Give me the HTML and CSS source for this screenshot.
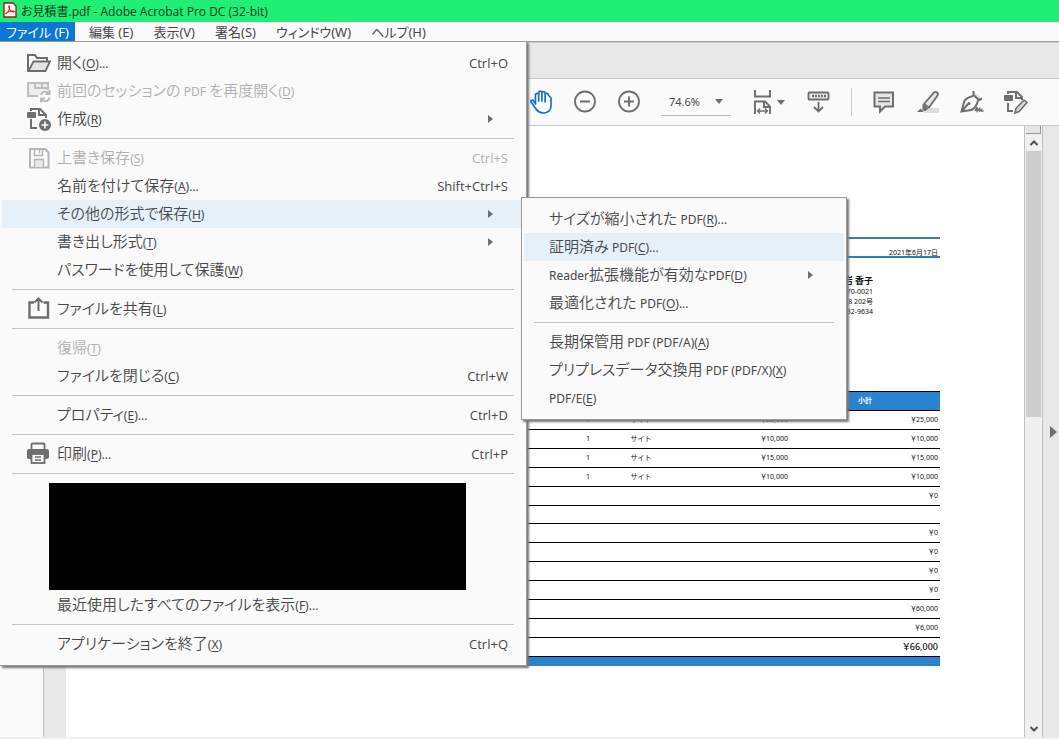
FILE: index.html
```html
<!DOCTYPE html>
<html lang="ja">
<head>
<meta charset="utf-8">
<title>お見積書.pdf - Adobe Acrobat Pro DC (32-bit)</title>
<link rel="stylesheet" href="styles.css">
</head>
<body>
<div class="app">
  <header class="titlebar">
    <svg class="app-icon" width="14" height="16" viewBox="0 0 14 16"><path d="M1 1h9l3 3v11H1z" fill="#fff" stroke="#a31b12" stroke-width="1.4"/><path d="M3 11.800c1.500-.3 4-4.500 3.600-7.300c-.2-1-1.200-.6-.8.6c.6 2.400 2.600 4.500 4.700 4.900c1 .1 1-.9 0-1c-2.500-.2-5.500.7-7.300 1.900c-.6.500-.5.900-.2.900z" fill="none" stroke="#d8271c" stroke-width="1.100"/></svg>
    <span>お見積書.pdf - Adobe Acrobat Pro DC (32-bit)</span>
  </header>

  <nav class="menubar">
    <button class="menubar-item active">ファイル (F)</button>
    <button class="menubar-item">編集 (E)</button>
    <button class="menubar-item">表示(V)</button>
    <button class="menubar-item">署名(S)</button>
    <button class="menubar-item">ウィンドウ(W)</button>
    <button class="menubar-item">ヘルプ(H)</button>

    <ul class="menu file-menu">
      <li><button class="item"><svg class="icon" viewBox="0 0 24 24"><path d="M1 20V4h7l2 3h10v4" fill="none" stroke="#6e6e6e" stroke-width="2"/><path d="M1.500 20L6.500 10.500H23L18.500 20z" fill="#e4e4e4" stroke="#6e6e6e" stroke-width="1.800"/></svg><span class="label">開く<small>(<u>O</u>)...</small></span><kbd>Ctrl+O</kbd></button></li>
      <li><button class="item" disabled><svg class="icon" viewBox="0 0 24 24"><path d="M11 17H1V4h20v7" fill="#eee" stroke="#bdbdbd" stroke-width="2"/><path d="M8 4v5h13M15 4v5" fill="none" stroke="#bdbdbd" stroke-width="1.800"/><path d="M14 16a4.500 4.500 0 0 1 8-1.500M22.500 18.500a4.500 4.500 0 0 1-8 2M22.500 11v4h-4M14 23.500v-4h4" fill="none" stroke="#b6b6b6" stroke-width="1.800"/></svg><span class="label">前回のセッションの <small>PDF</small> を再度開く<small>(<u>D</u>)</small></span></button></li>
      <li><button class="item"><svg class="icon" viewBox="0 0 24 24"><path d="M4 4V2h9l6 6v3M4 12v9h6M12 2v6h6" fill="none" stroke="#6e6e6e" stroke-width="2"/><rect x="0" y="5" width="9" height="6" rx="1" fill="#6e6e6e"/><circle cx="18" cy="18" r="6" fill="#6e6e6e"/><path d="M18 14.500v7M14.500 18h7" stroke="#fff" stroke-width="1.600"/></svg><span class="label">作成<small>(<u>R</u>)</small></span><svg class="arrow" viewBox="0 0 6 8"><path d="M0 0L5 4L0 8z"/></svg></button></li>
      <li class="separator"></li>
      <li><button class="item" disabled><svg class="icon" viewBox="0 0 24 24"><path d="M3 3h15l3.500 3.500V21.500H3z" fill="none" stroke="#b5b5b5" stroke-width="2"/><path d="M7.500 3v6.500h8V3M12.500 4v3.500" fill="none" stroke="#b5b5b5" stroke-width="1.500"/><path d="M7.500 21v-7.500h9V21" fill="#e8e8e8" stroke="#b5b5b5" stroke-width="1.300"/></svg><span class="label">上書き保存<small>(<u>S</u>)</small></span><kbd>Ctrl+S</kbd></button></li>
      <li><button class="item"><span class="icon"></span><span class="label">名前を付けて保存<small>(<u>A</u>)...</small></span><kbd>Shift+Ctrl+S</kbd></button></li>
      <li class="has-submenu"><button class="item selected"><span class="icon"></span><span class="label">その他の形式で保存<small>(<u>H</u>)</small></span><svg class="arrow" viewBox="0 0 6 8"><path d="M0 0L5 4L0 8z"/></svg></button>
        <ul class="menu submenu">
          <li><button class="item"><span class="label">サイズが縮小された <small>PDF(<u>R</u>)...</small></span></button></li>
          <li><button class="item selected"><span class="label">証明済み <small>PDF(<u>C</u>)...</small></span></button></li>
          <li><button class="item"><span class="label"><small>Reader</small>拡張機能が有効な<small>PDF(<u>D</u>)</small></span><svg class="arrow" viewBox="0 0 6 8"><path d="M0 0L5 4L0 8z"/></svg></button></li>
          <li><button class="item"><span class="label">最適化された <small>PDF(<u>O</u>)...</small></span></button></li>
          <li class="separator"></li>
          <li><button class="item"><span class="label">長期保管用 <small>PDF (PDF/A)(<u>A</u>)</small></span></button></li>
          <li><button class="item"><span class="label">プリプレスデータ交換用 <small>PDF (PDF/X)(<u>X</u>)</small></span></button></li>
          <li><button class="item"><span class="label"><small>PDF/E(<u>E</u>)</small></span></button></li>
        </ul>
      </li>
      <li><button class="item"><span class="icon"></span><span class="label">書き出し形式<small>(<u>T</u>)</small></span><svg class="arrow" viewBox="0 0 6 8"><path d="M0 0L5 4L0 8z"/></svg></button></li>
      <li><button class="item"><span class="icon"></span><span class="label">パスワードを使用して保護<small>(<u>W</u>)</small></span></button></li>
      <li class="separator"></li>
      <li><button class="item"><svg class="icon" viewBox="0 0 24 24"><path d="M7 5.500H2.500v15h18.500v-15h-4.500" fill="none" stroke="#6e6e6e" stroke-width="2.400"/><path d="M11.500 14V2.500M7.500 5.500l4-4l4 4" fill="none" stroke="#6e6e6e" stroke-width="2"/></svg><span class="label">ファイルを共有<small>(<u>L</u>)</small></span></button></li>
      <li class="separator"></li>
      <li><button class="item" disabled><span class="icon"></span><span class="label">復帰<small>(<u>T</u>)</small></span></button></li>
      <li><button class="item"><span class="icon"></span><span class="label">ファイルを閉じる<small>(<u>C</u>)</small></span><kbd>Ctrl+W</kbd></button></li>
      <li class="separator"></li>
      <li><button class="item"><span class="icon"></span><span class="label">プロパティ<small>(<u>E</u>)...</small></span><kbd>Ctrl+D</kbd></button></li>
      <li class="separator"></li>
      <li><button class="item"><svg class="icon" viewBox="0 0 24 24"><rect x="4.500" y="1.500" width="13" height="8" rx="1" fill="#fafafa" stroke="#6e6e6e" stroke-width="1.800"/><rect x="0" y="7" width="22" height="10" rx="2" fill="#6e6e6e"/><rect x="4.500" y="12" width="13" height="9" fill="#fafafa" stroke="#6e6e6e" stroke-width="1.800"/><path d="M8 15h6M8 18h6" stroke="#6e6e6e" stroke-width="1.300"/></svg><span class="label">印刷<small>(<u>P</u>)...</small></span><kbd>Ctrl+P</kbd></button></li>
      <li class="separator"></li>
      <li class="recent-files"></li>
      <li><button class="item"><span class="icon"></span><span class="label">最近使用したすべてのファイルを表示<small>(<u>F</u>)...</small></span></button></li>
      <li class="separator"></li>
      <li><button class="item"><span class="icon"></span><span class="label">アプリケーションを終了<small>(<u>X</u>)</small></span><kbd>Ctrl+Q</kbd></button></li>
    </ul>
  </nav>

  <div class="tabstrip"></div>

  <div class="toolbar">
    <button class="tool" aria-label="手のひらツール"><svg viewBox="0 0 24 24"><path d="M6.500 14V5a1.600 1.600 0 0 1 3.200 0V11V2.800a1.600 1.600 0 0 1 3.200 0V11V3.200a1.600 1.600 0 0 1 3.200 0V12V5a1.600 1.600 0 0 1 3.200 0L22 8v8c0 4.500-3.500 7-7.500 7s-6.500-2-8.500-5.500L2 12c-.8-1.800 1.500-2.500 2.500-1z" fill="#fff" stroke="#1a6fc4" stroke-width="1.700" stroke-linejoin="round"/></svg></button>
    <button class="tool" aria-label="縮小"><svg viewBox="0 0 24 24"><circle cx="12" cy="11.500" r="10" fill="none" stroke="#6e6e6e" stroke-width="1.800"/><path d="M7 11.500h10" stroke="#6e6e6e" stroke-width="2"/></svg></button>
    <button class="tool" aria-label="拡大"><svg viewBox="0 0 24 24"><circle cx="12" cy="11.500" r="10" fill="none" stroke="#6e6e6e" stroke-width="1.800"/><path d="M7 11.500h10M12 6.500v10" stroke="#6e6e6e" stroke-width="2"/></svg></button>
    <label class="zoom"><select aria-label="ズーム"><option>74.6%</option></select><svg class="caret" viewBox="0 0 8 5"><path d="M0 0H8L4 5z"/></svg></label>
    <button class="tool fit" aria-label="幅に合わせる"><svg viewBox="0 0 24 24"><path d="M4 0v6.500h15V0M4 24V11.500h10l5 5V24M13 12v5h5.500" fill="none" stroke="#6e6e6e" stroke-width="1.900"/><path d="M6.500 21h10M9 18.500L6.500 21l2.500 2.500M14 18.500l2.500 2.500l-2.500 2.500" fill="none" stroke="#6e6e6e" stroke-width="1.300"/></svg><svg class="caret" viewBox="0 0 8 5"><path d="M0 0H8L4 5z"/></svg></button>
    <button class="tool" aria-label="ツールバー"><svg viewBox="0 0 24 24"><rect x="1.500" y="2.500" width="20" height="7" rx="1" fill="#eee" stroke="#6e6e6e" stroke-width="1.900"/><path d="M5 6h14" stroke="#6e6e6e" stroke-width="2.500" stroke-dasharray="2 1"/><path d="M11.500 12v9.500M7 17l4.500 4.500l4.500-4.500" fill="none" stroke="#6e6e6e" stroke-width="1.900"/></svg></button>
    <span class="divider"></span>
    <div class="tool-group">
      <button class="tool" aria-label="コメント"><svg viewBox="0 0 24 24"><path d="M2.500 2.500h18.500v14h-8l-5 5v-5H2.500z" fill="#e6e6e6" stroke="#6e6e6e" stroke-width="2"/><path d="M6 8h12M6 11.500h12" stroke="#6e6e6e" stroke-width="1.500"/></svg></button>
      <button class="tool" aria-label="ハイライト"><svg viewBox="0 0 24 24"><rect x="8" y="18" width="15" height="5" fill="#dcdcdc"/><path d="M18 2.500c2-1.500 5 .5 3.500 3L13 17.500l-5-3.500z" fill="#e6e6e6" stroke="#6e6e6e" stroke-width="1.800"/><path d="M6.500 14l6 4.500l-3 2.500l-3-.5zM1 22l3.500-3.500l3 3L7 22z" fill="#6e6e6e"/></svg></button>
      <button class="tool" aria-label="署名"><svg viewBox="0 0 24 24"><path d="M14 2l7 5l-4 4z" fill="#e2e2e2"/><path d="M13.500 1v4l5.500 5l3-1.500" fill="none" stroke="#6e6e6e" stroke-width="2"/><path d="M13 6C9 7 5 9 4 12L1.500 21.500L11 20c4-1.500 6-5 7-9.500M2 21l6-7" fill="none" stroke="#6e6e6e" stroke-width="2"/><circle cx="9" cy="13.500" r="1.600" fill="#6e6e6e"/><path d="M15 21l2-4v4l2.500-2.500v2.500l2-1.500v1.500h2" fill="none" stroke="#6e6e6e" stroke-width="1.500"/></svg></button>
      <button class="tool" aria-label="編集"><svg viewBox="0 0 24 24"><path d="M4 4V2h9l5 5v3M4 13v8h5M12 2v6h6" fill="none" stroke="#6e6e6e" stroke-width="1.900"/><rect x="0" y="5" width="9" height="6" rx="1" fill="#6e6e6e"/><path d="M12 18.500L20 10l3 2.500L15 21.500l-4 1.500z" fill="#ddd" stroke="#6e6e6e" stroke-width="1.600"/></svg></button>
    </div>
  </div>

  <main class="workspace">
    <aside class="nav-pane"></aside>
    <article class="page">
      <div class="date">2021年6月17日</div>
      <address class="sender">
        <strong>岩 香子</strong>
        <span>70-0021</span>
        <span>8 202号</span>
        <span>32-9634</span>
      </address>
      <table class="estimate">
        <colgroup><col><col class="col-qty"><col class="col-unit"><col class="col-price"><col class="col-total"></colgroup>
        <thead><tr><th></th><th></th><th></th><th></th><th>小計</th></tr></thead>
        <tbody>
          <tr><td></td><td>1</td><td>サイト</td><td>￥25,000</td><td>￥25,000</td></tr>
          <tr><td></td><td>1</td><td>サイト</td><td>￥10,000</td><td>￥10,000</td></tr>
          <tr><td></td><td>1</td><td>サイト</td><td>￥15,000</td><td>￥15,000</td></tr>
          <tr><td></td><td>1</td><td>サイト</td><td>￥10,000</td><td>￥10,000</td></tr>
          <tr><td></td><td></td><td></td><td></td><td>￥0</td></tr>
          <tr class="blank"><td></td><td></td><td></td><td></td><td></td></tr>
          <tr><td></td><td></td><td></td><td></td><td>￥0</td></tr>
          <tr><td></td><td></td><td></td><td></td><td>￥0</td></tr>
          <tr><td></td><td></td><td></td><td></td><td>￥0</td></tr>
          <tr><td></td><td></td><td></td><td></td><td>￥0</td></tr>
          <tr><td></td><td></td><td></td><td></td><td>￥60,000</td></tr>
          <tr><td></td><td></td><td></td><td></td><td>￥6,000</td></tr>
          <tr class="grand"><td></td><td></td><td></td><td></td><td>￥66,000</td></tr>
        </tbody>
      </table>
      <div class="table-foot"></div>
    </article>
    <div class="scrollbar">
      <div class="split-box"></div>
      <button class="scroll-button" aria-label="上へ"><svg viewBox="0 0 10 8"><path d="M1.500 6L5 2.500L8.500 6" fill="none" stroke="#505050" stroke-width="2"/></svg></button>
      <div class="thumb"></div>
      <button class="scroll-button" aria-label="下へ"><svg viewBox="0 0 10 8"><path d="M1.500 2L5 5.500L8.500 2" fill="none" stroke="#505050" stroke-width="2"/></svg></button>
    </div>
    <aside class="tools-pane"><button aria-label="パネルを開く"><svg viewBox="0 0 7 12"><path d="M0 0L7 6L0 12z" fill="#6e6e6e"/></svg></button></aside>
  </main>
</div>
</body>
</html>
```
FILE: styles.css
```css
* { box-sizing: border-box; }

body {
  margin: 0;
  font-family: "Noto Sans", "Noto Sans CJK JP", sans-serif;
  color: #484848;
  background: #fafafa;
}

button, select {
  font: inherit;
  color: inherit;
  background: none;
  border: 0;
  padding: 0;
  margin: 0;
}

svg { display: block; }

.app {
  display: flex;
  flex-direction: column;
  height: 100vh;
  overflow: hidden;
}

/* Title bar */
.titlebar {
  display: flex;
  align-items: center;
  gap: 4px;
  height: 22px;
  flex: none;
  padding-left: 3px;
  background: #1fef74;
  color: #0c3a1c;
  font-family: "Open Sans", "Noto Sans CJK JP", sans-serif;
  font-size: 12px;
  font-feature-settings: "palt";
}

.titlebar span { padding-bottom: 1px; }

.app-icon { margin-top: -2px; }

/* Menu bar */
.menubar {
  position: relative;
  z-index: 2;
  display: flex;
  gap: 8px;
  height: 20px;
  flex: none;
  border-bottom: 1px solid #a0a0a0;
}

.menubar-item {
  padding: 0 6px;
  font-family: "Noto Sans", "Noto Sans CJK JP", sans-serif;
  font-size: 13px;
  line-height: 20px;
  white-space: nowrap;
  font-feature-settings: "palt";
}

.menubar-item.active {
  background: #0a78d7;
  color: #fff;
}

/* Drop-down menus */
.menu {
  position: absolute;
  margin: 0;
  list-style: none;
  background: #fafafa;
  border: 1px solid #999;
  box-shadow: 2px 2px 2px #777;
}

.file-menu {
  top: 19px;
  left: 0;
  width: 527px;
  padding: 7px 2px;
  border-left: 0;
}

.item {
  display: flex;
  align-items: center;
  width: 100%;
  height: 28px;
  padding: 0 16px 0 25px;
  text-align: left;
  white-space: nowrap;
}

.item.selected { background: #e5f0f9; }
.item:disabled { color: #b0b0b0; }

.icon {
  width: 24px;
  height: 24px;
  margin-right: 6px;
  flex: none;
}

.label {
  flex: 1;
  padding-bottom: 1px;
  font-family: "Noto Sans CJK JP", sans-serif;
  font-size: 15px;
  font-weight: 350;
  line-height: 27px;
  font-feature-settings: "palt";
}

.label small {
  font-family: "Noto Sans", sans-serif;
  font-size: 12px;
  font-weight: 400;
}

.item kbd {
  font-family: "Open Sans", sans-serif;
  font-size: 13px;
}

.label u { text-underline-offset: 2px; }

.arrow {
  width: 6px;
  height: 8px;
  margin-right: 14px;
  fill: #6e6e6e;
}

.separator {
  height: 1px;
  margin: 5px 10px;
  background: #c4c4c4;
}

.has-submenu { position: relative; }

.submenu {
  top: -3px;
  left: 519px;
  width: 326px;
  padding: 7px 2px;
}

.submenu .item { padding: 0 16px 0 25px; }

.recent-files {
  height: 107px;
  margin: 9px 58px 1px 47px;
  background: #000;
}

/* Tab strip and toolbar */
.tabstrip {
  height: 37px;
  flex: none;
  background: #e8e8e8;
  border-top: 1px solid #c8c8c8;
  border-bottom: 1px solid #c8c8c8;
}

.toolbar {
  display: flex;
  align-items: center;
  gap: 20px;
  height: 47px;
  flex: none;
  padding-left: 529px;
  border-bottom: 1px solid #c8c8c8;
}

.tool svg { width: 24px; height: 24px; }

.toolbar .caret {
  width: 8px;
  height: 5px;
  fill: #6e6e6e;
}

.zoom {
  display: grid;
  align-items: center;
  width: 70px;
  height: 27px;
  border-bottom: 1px solid #b8b8b8;
}

.zoom select {
  grid-area: 1 / 1;
  appearance: none;
  padding-left: 8px;
  font-size: 11px;
}

.zoom .caret {
  grid-area: 1 / 1;
  justify-self: end;
  margin-right: 8px;
  pointer-events: none;
}

.fit {
  display: flex;
  align-items: center;
  gap: 2px;
  margin-right: 2px;
}

.divider {
  width: 1px;
  height: 28px;
  background: #c8c8c8;
}

.tool-group {
  display: flex;
  gap: 20px;
}

/* Workspace */
.workspace {
  display: flex;
  flex: 1;
  min-height: 0;
  background: #e8e8e8;
  border-bottom: 2px solid #efefef;
}

.nav-pane {
  width: 44px;
  background: #fafafa;
  border-right: 1px solid #bdbdbd;
}

.page {
  flex: 1;
  margin-left: 22px;
  padding: 111px 84px 0 60px;
  background: #fff;
  color: #111;
  font-size: 7px;
  line-height: 10px;
}

.date {
  padding: 9px 2px 0 0;
  height: 21px;
  border-top: 2px solid #3f7c9e;
  border-bottom: 2px solid #2c7cc0;
  text-align: right;
  font-feature-settings: "palt";
}

.sender {
  display: flex;
  flex-direction: column;
  align-items: flex-end;
  height: 133px;
  padding: 16px 67px 0 0;
  font-style: normal;
}

.sender strong {
  font-size: 9px;
  line-height: 13px;
}

.estimate {
  width: 100%;
  table-layout: fixed;
  border-collapse: collapse;
}

.col-qty { width: 54px; }
.col-unit { width: 52px; }
.col-price { width: 123px; }
.col-total { width: 150px; }

.estimate th, .estimate td {
  height: 19px;
  padding: 0 2px;
  border-bottom: 1px solid #000;
  text-align: center;
  white-space: nowrap;
}

.estimate th {
  background: #2983cf;
  border-top: 1px solid #000;
  color: #fff;
}

.estimate .blank td { height: 18px; }

.estimate td:nth-child(n + 4) {
  text-align: right;
  font-feature-settings: "palt";
}

.estimate .grand td {
  font-size: 9px;
  font-weight: 500;
}

.table-foot {
  height: 9px;
  background: #2983cf;
}

.scrollbar {
  display: flex;
  flex-direction: column;
  width: 19px;
  padding: 0 1px;
  background: #f0f0f0;
  border-left: 1px solid #c0c0c0;
  border-right: 1px solid #c0c0c0;
}

.split-box {
  height: 8px;
  background: #e4e4e4;
  border-right: 1px solid #999;
  border-bottom: 1px solid #999;
}

.scroll-button {
  display: flex;
  align-items: center;
  justify-content: center;
  height: 17px;
}

.scroll-button:last-child { margin-top: auto; }
.scroll-button svg { width: 10px; height: 8px; }

.thumb {
  height: 266px;
  background: #cdcdcd;
}

.tools-pane {
  display: flex;
  align-items: center;
  justify-content: flex-end;
  width: 16px;
  padding-right: 2px;
}

.tools-pane svg { width: 7px; height: 12px; }
```
